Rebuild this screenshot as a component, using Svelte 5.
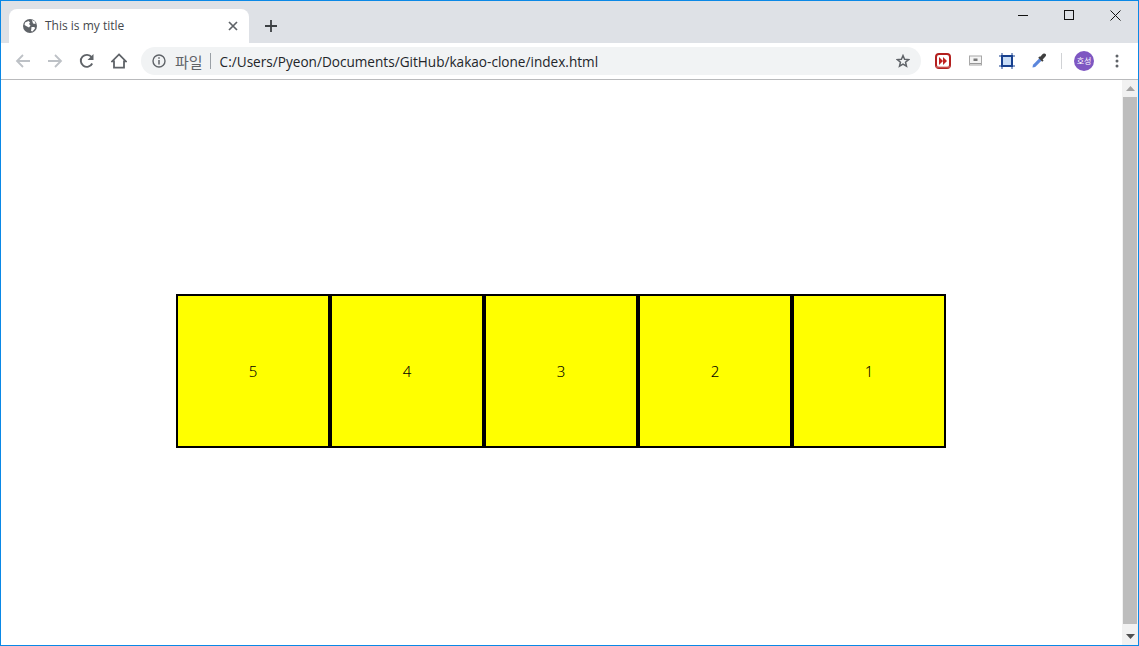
<script>
  const boxes = [5, 4, 3, 2, 1];
</script>

<div class="window">
  <div class="tabstrip">
    <div class="tab">
      <svg class="globe" width="16" height="16" viewBox="0 0 16 16"><circle cx="8" cy="8" r="7" fill="#5f6368"/><path d="M3 4.5 L6.5 3 L8 4.5 L7 6 L8.5 7.5 L7 9.5 L5 8.5 L2.5 7 Z M9.5 9 L12.5 9 L13 10.5 L10.5 13.5 L9 13 Z M10 2 L13 3.5 L13.5 6 L11 5.5 Z" fill="#fff"/></svg>
      <span class="title">This is my title</span>
      <svg class="close" width="10" height="10" viewBox="0 0 10 10"><path d="M1 1 L9 9 M9 1 L1 9" stroke="#5f6368" stroke-width="1.7" fill="none"/></svg>
    </div>
    <svg class="plus" width="12" height="12" viewBox="0 0 12 12"><path d="M6 0 V12 M0 6 H12" stroke="#3c4043" stroke-width="1.8" fill="none"/></svg>
    <div class="controls">
      <svg width="10" height="10" viewBox="0 0 10 10"><path d="M0 5.5 H10" stroke="#111" fill="none"/></svg>
      <svg width="10" height="10" viewBox="0 0 10 10"><rect x=".5" y=".5" width="9" height="9" stroke="#111" fill="none"/></svg>
      <svg width="11" height="11" viewBox="0 0 11 11"><path d="M.5 .5 L10.5 10.5 M10.5 .5 L.5 10.5" stroke="#111" fill="none"/></svg>
    </div>
  </div>

  <div class="toolbar">
    <svg class="nav" width="16" height="16" viewBox="0 0 16 16"><path d="M15 8 H2 M8 2 L2 8 L8 14" stroke="#bdc1c6" stroke-width="1.8" fill="none"/></svg>
    <svg class="nav" width="16" height="16" viewBox="0 0 16 16"><path d="M1 8 H14 M8 2 L14 8 L8 14" stroke="#bdc1c6" stroke-width="1.8" fill="none"/></svg>
    <svg class="nav" width="16" height="16" viewBox="0 0 16 16"><path d="M13.2 10.5 A6 6 0 1 1 12.6 4.2" stroke="#5f6368" stroke-width="1.9" fill="none"/><path d="M14.5 1 V7 H8.5 Z" fill="#5f6368"/></svg>
    <svg class="nav" width="16" height="16" viewBox="0 0 16 16"><path d="M8 1.4 L15 8.4 H13 V14.6 H3 V8.4 H1 Z" stroke="#5f6368" stroke-width="1.8" fill="none" stroke-linejoin="miter"/></svg>

    <div class="omnibox">
      <svg width="14" height="14" viewBox="0 0 14 14"><circle cx="7" cy="7" r="6" stroke="#5f6368" stroke-width="1.4" fill="none"/><path d="M7 6 V10.5" stroke="#5f6368" stroke-width="1.5"/><path d="M7 3.3 V4.8" stroke="#5f6368" stroke-width="1.5"/></svg>
      <span class="scheme">파일</span>
      <span class="sep"></span>
      <span class="url">C:/Users/Pyeon/Documents/GitHub/kakao-clone/index.html</span>
      <svg class="star" width="14" height="14" viewBox="0 0 16 16"><path d="M8 1.8 L9.8 6 L14.4 6.4 L10.9 9.4 L12 13.9 L8 11.5 L4 13.9 L5.1 9.4 L1.6 6.4 L6.2 6 Z" stroke="#5f6368" stroke-width="1.7" fill="none"/></svg>
    </div>

    <div class="extensions">
      <svg width="16" height="16" viewBox="0 0 16 16"><rect x="1" y="1" width="14" height="14" rx="3" fill="#fff" stroke="#b3201f" stroke-width="2"/><path d="M4 4 L8 8 L4 12 Z M8 4 L12 8 L8 12 Z" fill="#c0211f"/><path d="M1 14 H15" stroke="#d97a78"/></svg>
      <svg class="screen" width="14" height="12" viewBox="0 0 14 12"><rect x=".5" y="1" width="12" height="9" fill="#f4f4f4" stroke="#a8a8a8"/><rect x="4.5" y="3.5" width="4" height="2.5" fill="#777"/><path d="M1 8.5 H12" stroke="#999"/></svg>
      <svg class="crop" width="16" height="16" viewBox="0 0 16 16"><rect x="3" y="3" width="10" height="10" fill="#c7dcf6" stroke="#17408f" stroke-width="2"/><path d="M3 0 V2 M13 0 V2 M3 14 V16 M13 14 V16 M0 3 H2 M0 13 H2 M14 3 H16 M14 13 H16" stroke="#17408f"/></svg>
      <svg width="16" height="16" viewBox="0 0 16 16"><path d="M1.5 14.5 L2 11.8 L8.2 5.6 L10.4 7.8 L4.2 14 Z" fill="#5b86dc"/><path d="M7.2 4.8 L11.2 8.8 L12.6 7.4 L11.6 6.4 L14 4 Q16 2 14.2 .8 Q12.6 -.2 11 1.8 L9.6 3.4 L8.6 3.4 Z" fill="#3f3f3f"/></svg>
    </div>
    <span class="toolsep"></span>
    <span class="avatar">호성</span>
    <svg class="menu" width="4" height="14" viewBox="0 0 4 14"><circle cx="2" cy="2" r="1.5" fill="#5f6368"/><circle cx="2" cy="7" r="1.5" fill="#5f6368"/><circle cx="2" cy="12" r="1.5" fill="#5f6368"/></svg>
  </div>

  <div class="viewport">
    <main class="page">
      <div class="row">
        {#each boxes as n}
          <div class="box">{n}</div>
        {/each}
      </div>
    </main>
    <div class="scrollbar">
      <svg width="9" height="5" viewBox="0 0 9 5"><path d="M4.5 0 L9 5 H0 Z" fill="#a3a3a3"/></svg>
      <div class="thumb"></div>
      <svg width="9" height="5" viewBox="0 0 9 5"><path d="M0 0 H9 L4.5 5 Z" fill="#505050"/></svg>
    </div>
  </div>
</div>

<style>
  :global(body) { margin: 0; overflow: hidden; background: #fff; }
  .window {
    box-sizing: border-box;
    width: 1139px;
    height: 646px;
    display: flex;
    flex-direction: column;
    border: 1px solid #0a88e6;
    font-family: "Open Sans", "Noto Sans", "Noto Sans CJK KR", sans-serif;
  }
  .tabstrip {
    flex: none;
    height: 42px;
    background: #dee1e6;
    display: flex;
    align-items: flex-end;
    padding-left: 8px;
    position: relative;
  }
  .tab {
    box-sizing: border-box;
    width: 240px;
    height: 34px;
    background: #fff;
    border-radius: 8px 8px 0 0;
    display: flex;
    align-items: center;
    padding: 0 11px 1px 13px;
  }
  .globe { flex: none; }
  .title { flex: 1; margin-left: 7px; font-size: 12px; color: #45484d; }
  .plus { margin: 0 0 11px 16px; }
  .controls {
    position: absolute;
    top: 9px;
    right: 17px;
    display: flex;
    align-items: flex-start;
    gap: 36px;
  }
  .toolbar {
    flex: none;
    box-sizing: border-box;
    height: 37px;
    background: #fff;
    border-bottom: 1px solid #b9babc;
    display: flex;
    align-items: center;
    padding-left: 14px;
  }
  .nav { margin-right: 16px; flex: none; }
  .omnibox {
    box-sizing: border-box;
    width: 780px;
    height: 28px;
    margin-left: -2px;
    background: #f1f3f4;
    border-radius: 14px;
    display: flex;
    align-items: center;
    padding: 0 11px 0 11px;
  }
  .scheme { margin-left: 9px; font-size: 15px; color: #5f6368; font-family: "Noto Sans CJK KR", sans-serif; }
  .sep { width: 1px; height: 16px; background: #9aa0a6; margin: 0 9px 0 7px; }
  .url { flex: 1; font-size: 13.6px; color: #23262a; }
  .extensions { display: flex; align-items: center; gap: 16px; margin-left: 14px; }
  .screen { margin-left: 2px; }
  .crop { margin-left: 0; }
  .toolsep { width: 1px; height: 16px; background: #d0d2d5; margin-left: 14px; }
  .avatar {
    width: 20px;
    height: 20px;
    margin-left: 12px;
    border-radius: 50%;
    background: #7e57c2;
    color: #fff;
    font-size: 8px;
    line-height: 20px;
    text-align: center;
    font-family: "Noto Sans CJK KR", sans-serif;
  }
  .menu { margin-left: 21px; }
  .viewport { flex: 1; min-height: 0; display: flex; }
  .page {
    flex: 1;
    display: flex;
    align-items: center;
    justify-content: center;
    background: #fff;
    padding: 17px 2px 0 0;
  }
  .row { display: flex; }
  .box {
    box-sizing: border-box;
    width: 154px;
    height: 154px;
    border: 2px solid #000;
    padding-left: 1px;
    background: #ff0;
    display: flex;
    align-items: center;
    justify-content: center;
    font-size: 15px;
    font-family: "Noto Sans", sans-serif;
    font-weight: 300;
    color: #000;
  }
  .scrollbar {
    flex: none;
    width: 16px;
    background: #f1f1f1;
    display: flex;
    flex-direction: column;
    align-items: center;
    justify-content: space-between;
    padding: 6px 0;
    box-sizing: border-box;
  }
  .thumb { width: 14px; flex: 1; margin: 6px 0 10px; background: #bdbdbd; }
</style>
